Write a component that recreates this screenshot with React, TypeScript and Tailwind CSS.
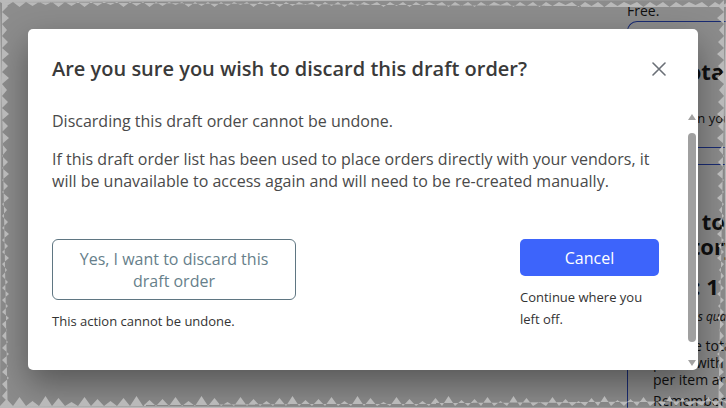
import React from 'react';

// torn-paper edge strips drawn round the frame
function zigzag(len: number, period: number, base: number, depth: number, jitter: number[]) {
  const pts: string[] = [];
  let i = 0;
  for (let p = 0; p <= len + period; p += period) {
    const d = depth + (jitter.length ? jitter[i % jitter.length] : 0);
    pts.push(`${p},${base}`, `${p + period / 2},${d}`);
    i++;
  }
  return pts;
}

function TornEdges() {
  const edge = '#b9b9b9';
  const top = zigzag(726, 13, 2, 6, [0, 1, 0, -1, 1]);
  const bottom = zigzag(726, 13, 2, 9, [0, 2, -2, 3, 1, -3, 2, 0, -2, 1, 3, -1]);
  const side = zigzag(408, 12, 2, 8, [0, 1, -1, 0, 1]);
  return (
    <>
      <svg className="pointer-events-none absolute left-0 top-0" width="726" height="10">
        <polygon fill={edge} points={`0,0 726,0 ${top.join(' ')} 0,2`} />
      </svg>
      <svg className="pointer-events-none absolute bottom-0 left-0" width="726" height="14">
        <polygon
          fill={edge}
          points={`0,14 726,14 ${bottom.map((s) => { const [x, y] = s.split(','); return `${x},${14 - Number(y)}`; }).join(' ')} 0,12`}
        />
      </svg>
      <svg className="pointer-events-none absolute left-0 top-0" width="12" height="408">
        <polygon fill={edge} points={`0,0 0,408 ${side.map((s) => { const [y, x] = s.split(','); return `${x},${y}`; }).join(' ')}`} />
      </svg>
      <svg className="pointer-events-none absolute right-0 top-0" width="12" height="408">
        <polygon fill={edge} points={`12,0 12,408 ${side.map((s) => { const [y, x] = s.split(','); return `${12 - Number(x)},${y}`; }).join(' ')}`} />
      </svg>
    </>
  );
}

function FakeScrollbar() {
  return (
    <div className="flex w-[12px] flex-col items-center pb-[4px] pt-[5px]">
      <svg width="8" height="6" viewBox="0 0 8 6">
        <polygon points="4,0 8,6 0,6" fill="#a3a3a3" />
      </svg>
      <div className="mb-[18px] mt-[13px] w-[8px] flex-1 rounded-full bg-[#a0a0a0]" />
      <svg width="8" height="6" viewBox="0 0 8 6">
        <polygon points="0,0 8,0 4,6" fill="#a3a3a3" />
      </svg>
    </div>
  );
}

export default function App() {
  return (
    <div className="relative h-[408px] w-[726px] overflow-hidden bg-white font-['Open_Sans',sans-serif]">
      {/* page behind the dialog */}
      <div className="flex h-full">
        <div className="w-[627px] shrink-0" />
        <aside className="flex-1 overflow-hidden pt-[1px] text-[#1c1c1c]">
          <p className="text-[14px] leading-[20px]">Free.</p>
          <div className="h-[420px] w-[200px] rounded-tl-[10px] border-l border-t border-[#2f4fd0] pl-[25px] pt-[34px] whitespace-nowrap">
            <h2 className="ml-[22px] text-[22px] font-bold leading-[30px]">Total</h2>
            <p className="ml-[17px] mt-[23px] text-[13px] leading-[18px]">When you-</p>
            <div className="mt-[20px] h-[18px] w-[80px] border-y border-[#2f4fd0]" />
            <h3 className="mt-[44px] text-[22px] font-bold leading-[25px]">Add to Draft</h3>
            <h3 className="ml-[-24px] text-[22px] font-bold leading-[25px]">Inventory</h3>
            <p className="ml-[-21px] mt-[14px] text-[22px] font-bold leading-[26px]">Items: 1</p>
            <p className="ml-[21px] mt-[9px] text-[12px] italic leading-[18px]">Items quantity</p>
            <p className="ml-[-8px] mt-[11px] text-[14px] leading-[17px]">Note the total</p>
            <p className="text-[14px] leading-[17px]">prices with</p>
            <p className="text-[14px] leading-[17px]">per item are :</p>
            <p className="mt-[4px] text-[14px] leading-[17px]">Remember to</p>
          </div>
        </aside>
      </div>

      {/* overlay + dialog */}
      <div className="absolute inset-0 bg-black/45 pl-[28px] pt-[29px]">
        <div
          role="dialog"
          className="flex h-[341px] w-[670px] flex-col rounded-[5px] bg-white shadow-[0_14px_34px_rgba(0,0,0,0.38)]"
        >
          <div className="flex h-[80px] shrink-0 items-start justify-between pl-6 pr-[32px] pt-[26px]">
            <h1 className="text-[20px] font-semibold leading-[28px] text-[#3a3a3a]">
              Are you sure you wish to discard this draft order?
            </h1>
            <button className="mt-[7px] text-[#6b7077]" aria-label="Close">
              <svg width="14" height="14" viewBox="0 0 14 14">
                <path d="M1 1 13 13M13 1 1 13" stroke="currentColor" strokeWidth="1.6" strokeLinecap="round" />
              </svg>
            </button>
          </div>

          <div className="flex min-h-0 flex-1">
            <div className="flex-1 pl-6 pr-[27px] text-[#4a4a4a]">
              <p className="pt-[1px] text-[16px] leading-[22px]">Discarding this draft order cannot be undone.</p>
              <p className="mt-4 text-[16px] leading-[22px]">
                If this draft order list has been used to place orders directly with your vendors, it will be
                unavailable to access again and will need to be re-created manually.
              </p>

              <div className="mt-[47px] flex justify-between">
                <div className="w-[244px]">
                  <button className="h-[61px] w-full rounded-[6px] border border-[#5f7682] px-4 text-[16px] leading-[22px] text-[#677f8b]">
                    Yes, I want to discard this draft order
                  </button>
                  <p className="mt-[10px] text-[13px] leading-[22px] text-[#333]">This action cannot be undone.</p>
                </div>
                <div className="w-[139px]">
                  <button className="h-[37px] w-full rounded-[5px] bg-[#3d64fb] text-[16px] text-white">Cancel</button>
                  <p className="mt-[10px] text-[13px] leading-[22px] text-[#333]">Continue where you left off.</p>
                </div>
              </div>
            </div>
            <FakeScrollbar />
          </div>
        </div>
      </div>

      <TornEdges />
    </div>
  );
}
